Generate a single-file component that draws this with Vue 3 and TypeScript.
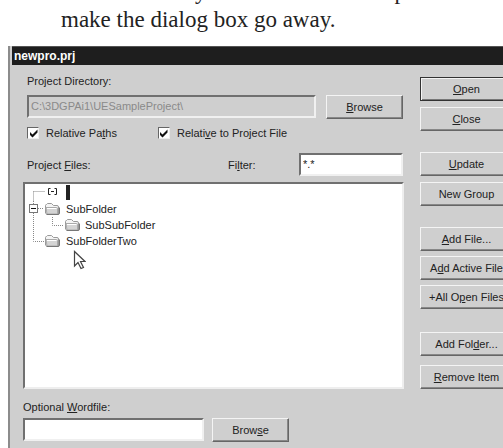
<script setup lang="ts">
import { ref } from 'vue'

interface Caption {
  before: string
  key: string
  after: string
}

interface Action extends Caption {
  primary?: boolean
}

interface TreeRow {
  label: string
  kind: 'root' | 'folder'
  level: number
  expandable?: boolean
  last?: boolean
}

const directory = ref('C:\\3DGPAi1\\UESampleProject\\')
const filter = ref('*.*')
const wordfile = ref('')
const relativePaths = ref(true)
const relativeToProject = ref(true)

const groups: { spacing: string; actions: Action[] }[] = [
  {
    spacing: 'normal',
    actions: [
      { before: '', key: 'O', after: 'pen', primary: true },
      { before: '', key: 'C', after: 'lose' },
    ],
  },
  {
    spacing: 'normal',
    actions: [
      { before: '', key: 'U', after: 'pdate' },
      { before: 'New Group', key: '', after: '' },
    ],
  },
  {
    spacing: 'tight',
    actions: [
      { before: '', key: 'A', after: 'dd File...' },
      { before: 'A', key: 'd', after: 'd Active File' },
      { before: '+All O', key: 'p', after: 'en Files' },
    ],
  },
  {
    spacing: 'loose',
    actions: [
      { before: 'Add Fol', key: 'd', after: 'er...' },
      { before: '', key: 'R', after: 'emove Item' },
    ],
  },
]

const rows: TreeRow[] = [
  { label: '', kind: 'root', level: 0 },
  { label: 'SubFolder', kind: 'folder', level: 0, expandable: true },
  { label: 'SubSubFolder', kind: 'folder', level: 1 },
  { label: 'SubFolderTwo', kind: 'folder', level: 0, last: true },
]
</script>

<template>
  <main class="page">
    <div class="previous" aria-hidden="true"><span>y</span><span>p</span></div>
    <p class="prose">make the dialog box go away.</p>

    <section class="dialog" role="dialog" aria-labelledby="dialog-title">
      <h1 id="dialog-title" class="titlebar">newpro.prj</h1>
      <div class="body">
        <div class="left">
          <div class="settings">
            <label class="caption" for="directory">Project Directory:</label>
            <div class="directory-row">
              <input id="directory" v-model="directory" class="field grow" type="text" disabled />
              <button class="button browse" type="button"><span><u>B</u>rowse</span></button>
            </div>
            <div class="checks">
              <label class="check">
                <input v-model="relativePaths" type="checkbox" />
                <span class="box">
                  <svg v-if="relativePaths" viewBox="0 0 9 9" width="9" height="9">
                    <path d="M1 3V6L3.500 8.500L8.500 3.500V0.500L3.500 5.500Z" fill="#111" />
                  </svg>
                </span>
                <span>Relative Pa<u>t</u>hs</span>
              </label>
              <label class="check">
                <input v-model="relativeToProject" type="checkbox" />
                <span class="box">
                  <svg v-if="relativeToProject" viewBox="0 0 9 9" width="9" height="9">
                    <path d="M1 3V6L3.500 8.500L8.500 3.500V0.500L3.500 5.500Z" fill="#111" />
                  </svg>
                </span>
                <span>Relati<u>v</u>e to Project File</span>
              </label>
            </div>
            <div class="filter-row">
              <span id="files-label" class="files-label">Project <u>F</u>iles:</span>
              <label class="filter-label" for="filter">Fi<u>l</u>ter:</label>
              <input id="filter" v-model="filter" class="field filter" type="text" />
            </div>
          </div>

          <div class="list">
            <ul class="tree" role="tree" aria-labelledby="files-label">
              <li v-for="(row, i) in rows" :key="i" class="row" role="treeitem">
                <svg class="guide" :class="{ nested: row.level === 1 }" height="16" aria-hidden="true">
                  <g stroke="#888" stroke-width="1" stroke-dasharray="1 1" fill="none">
                    <path v-if="row.kind === 'root'" d="M8.500 6.500V16M8.500 6.500H20" />
                    <path v-else-if="row.last" d="M8.500 0V8.500H19" />
                    <path v-else-if="row.level === 1" d="M8.500 0V16M27.500 0V8.500H39" />
                    <path v-else d="M8.500 0V16M13 7.500H19" />
                  </g>
                  <path
                    v-if="row.kind === 'root'"
                    d="M25.500 3.500H23.500V9.500H25.500M29.500 3.500H31.500V9.500H29.500M26 6.500H29"
                    fill="none"
                    stroke="#222"
                  />
                  <g v-if="row.expandable" fill="#fff">
                    <rect x="4.500" y="3.500" width="8" height="8" stroke="#777" />
                    <path d="M6 7.500H11" stroke="#111" />
                  </g>
                  <g v-if="row.kind === 'folder'" :transform="row.level === 1 ? 'translate(39 1)' : 'translate(19 1)'">
                    <path
                      d="M1.500 11V3.500Q1.500 2.500 2.500 2.500L3.500 1.500H7.500L9.500 3.500H13Q14.500 3.500 14.500 5V12H2.500Z"
                      fill="#f4f4f4"
                      stroke="#999"
                    />
                    <path d="M2 5.500H12.500Q13.500 5.500 13.500 6.500V12H3Z" fill="#d4d4d4" stroke="#aaa" />
                    <path d="M3 6.500H12.500" stroke="#fff" />
                    <path d="M2.500 12.500H14Q15.500 12.500 15.500 11V5.500" fill="none" stroke="#777" />
                  </g>
                </svg>
                <span v-if="row.kind === 'root'" class="selection"></span>
                <span v-else class="name">{{ row.label }}</span>
              </li>
            </ul>
            <svg class="pointer" viewBox="0 0 13 20" width="13" height="20" aria-hidden="true">
              <path d="M1.500 1.500V16L5 12.500L8 18.500L10.500 17.500L7.500 11.500H12Z" fill="#fff" stroke="#444" stroke-width="1.200" />
            </svg>
          </div>

          <label class="wordfile-label" for="wordfile">Optional <u>W</u>ordfile:</label>
          <div class="wordfile-row">
            <input id="wordfile" v-model="wordfile" class="field wordfile" type="text" />
            <button class="button browse" type="button"><span>Brow<u>s</u>e</span></button>
          </div>
        </div>

        <div class="actions">
          <div v-for="(group, g) in groups" :key="g" class="group" :class="group.spacing">
            <button
              v-for="(action, a) in group.actions"
              :key="a"
              class="button"
              :class="{ primary: action.primary }"
              type="button"
            >
              <span>{{ action.before }}<u v-if="action.key">{{ action.key }}</u>{{ action.after }}</span>
            </button>
          </div>
        </div>
      </div>
    </section>
  </main>
</template>

<style>
body {
  margin: 0;
  background: #fff;
}
</style>

<style scoped>
* {
  box-sizing: border-box;
}

.page {
  display: flex;
  flex-direction: column;
  min-height: 100vh;
  overflow: hidden;
  color: #222;
  font-family: "Liberation Sans", Arial, sans-serif;
  font-size: 11px;
  line-height: 14px;
}

.previous,
.prose {
  margin: 0;
  font-family: "Liberation Serif", "Times New Roman", serif;
  font-size: 23px;
}

.previous {
  display: flex;
  align-items: flex-end;
  gap: 188px;
  height: 4px;
  padding-left: 195px;
  line-height: 24px;
  overflow: hidden;
}

.prose {
  height: 42px;
  padding: 3px 0 0 61px;
  line-height: 26px;
  white-space: nowrap;
}

.dialog {
  display: flex;
  flex: 1;
  flex-direction: column;
  margin: 0 -20px 0 8px;
  padding-left: 2px;
  border-left: 2px solid #8c8c8c;
  background: #cfcfcf;
}

.titlebar {
  height: 19px;
  margin: 0;
  padding-left: 2px;
  border-top: 1px solid #555;
  background: #1e1e1e;
  color: #fff;
  font-size: 12px;
  line-height: 18px;
}

.body {
  display: flex;
  gap: 16px;
  padding: 9px 10px 4px 11px;
}

.left {
  display: flex;
  flex: 1;
  flex-direction: column;
  min-width: 0;
}

.settings {
  display: flex;
  flex-direction: column;
  padding: 0 1px 0 4px;
}

.caption {
  height: 21px;
}

.directory-row {
  display: flex;
  gap: 10px;
}

.field {
  height: 23px;
  min-width: 0;
  margin: 0;
  padding: 0 2px 2px;
  border: 2px solid;
  border-color: #707070 #f0f0f0 #f0f0f0 #707070;
  border-radius: 0;
  outline: 0;
  background: #fff;
  color: #222;
  font: inherit;
}

.field:disabled {
  background: #cfcfcf;
  color: #8a8a8a;
}

.grow {
  flex: 1;
}

.button {
  height: 24px;
  margin: 0;
  padding: 0;
  border: 1px solid;
  border-color: #f4f4f4 #666 #666 #f4f4f4;
  border-radius: 0;
  background: #cfcfcf;
  box-shadow: inset -1px -1px #888;
  color: #222;
  font: inherit;
  white-space: nowrap;
}

.primary {
  border-color: #333;
  box-shadow: inset 1px 1px #f4f4f4, inset -1px -1px #777;
}

.browse {
  width: 77px;
}

.checks {
  display: flex;
  gap: 41px;
  margin-top: 7px;
}

.check {
  position: relative;
  display: flex;
  align-items: center;
  gap: 7px;
  height: 14px;
  white-space: nowrap;
}

.check input {
  position: absolute;
  width: 12px;
  height: 12px;
  margin: 0;
  opacity: 0;
}

.box {
  display: flex;
  align-items: center;
  justify-content: center;
  width: 12px;
  height: 12px;
  border: 1px solid;
  border-color: #666 #eee #eee #666;
  background: #fff;
}

.box svg {
  flex: none;
}

.filter-row {
  display: flex;
  align-items: center;
  margin-top: 13px;
}

.files-label {
  flex: 1;
}

.filter-label {
  width: 71px;
}

.filter {
  width: 104px;
}

.list {
  position: relative;
  height: 207px;
  margin-top: 6px;
  border: 2px solid;
  border-color: #707070 #eee #eee #707070;
  background: #fff;
}

.tree {
  margin: 0;
  padding: 1px 0 0;
  list-style: none;
}

.row {
  display: flex;
  height: 16px;
  line-height: 16px;
}

.guide {
  flex: none;
  width: 41px;
}

.nested {
  width: 60px;
}

.selection {
  width: 4px;
  height: 15px;
  background: #222;
}

.pointer {
  position: absolute;
  top: 66px;
  left: 48px;
}

.wordfile-label {
  margin-top: 11px;
  height: 18px;
}

.wordfile-row {
  display: flex;
  gap: 8px;
}

.wordfile {
  width: 181px;
}

.actions {
  display: flex;
  flex: none;
  flex-direction: column;
  gap: 21px;
  width: 93px;
  padding-top: 3px;
}

.group {
  display: flex;
  flex-direction: column;
}

.normal {
  gap: 6px;
}

.tight {
  gap: 5px;
}

.loose {
  gap: 9px;
  margin-top: 2px;
}
</style>
